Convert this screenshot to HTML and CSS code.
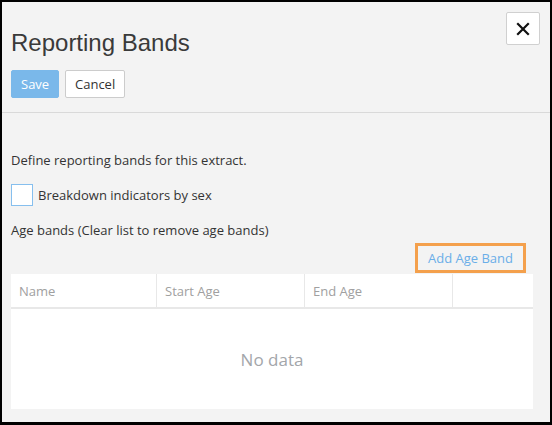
FILE: index.html
```html
<!DOCTYPE html>
<html>
<head>
<meta charset="utf-8">
<link rel="stylesheet" href="styles.css">
</head>
<body>
<div class="frame">
  <div class="header">
    <div class="head-left">
      <h1 class="title">Reporting Bands</h1>
      <div class="actions">
        <button class="btn btn-primary">Save</button>
        <button class="btn btn-default">Cancel</button>
      </div>
    </div>
    <button class="close" aria-label="Close">
      <svg width="14" height="14" viewBox="0 0 14 14"><path d="M2 2 L12 12 M12 2 L2 12" stroke="#111" stroke-width="2.2" stroke-linecap="square"/></svg>
    </button>
  </div>
  <div class="content">
    <p class="intro">Define reporting bands for this extract.</p>
    <label class="check-row"><span class="checkbox"></span><span>Breakdown indicators by sex</span></label>
    <p class="bands-label">Age bands (Clear list to remove age bands)</p>
    <div class="add-row"><button class="add-btn">Add Age Band</button></div>
    <div class="grid">
      <div class="grid-head">
        <div class="cell">Name</div>
        <div class="cell">Start Age</div>
        <div class="cell">End Age</div>
        <div class="cell"></div>
      </div>
      <div class="grid-body">No data</div>
    </div>
  </div>
</div>
</body>
</html>
```
FILE: styles.css
```css
html, body { margin: 0; padding: 0; }
body { font-family: "Open Sans", "Noto Sans", sans-serif; color: #333; }
.frame {
  width: 552px; height: 425px; box-sizing: border-box;
  border: 2px solid #000; border-bottom-width: 3px;
  background: #f3f3f3; overflow: hidden;
}
.header {
  display: flex; justify-content: space-between; align-items: flex-start;
  padding: 0 10px 14px 9px;
  border-bottom: 1px solid #d9d9d9;
}
.head-left { margin-top: 27px; }
.title {
  margin: 0; font-family: "Liberation Sans", Arial, sans-serif;
  font-weight: normal; font-size: 24px; line-height: 28px; color: #3a3a3a;
}
.actions { display: flex; gap: 6px; margin-top: 13px; }
.btn {
  font-family: "Open Sans", sans-serif; font-size: 13px;
  height: 28px; box-sizing: border-box; border-radius: 2px; padding: 0 9px; cursor: pointer;
}
.btn-primary { background: #7ab8ea; border: 1px solid #7ab8ea; color: #fff; width: 48px; }
.btn-default { background: #fff; border: 1px solid #cccccc; color: #333; width: 60px; }
.close {
  margin-top: 10px; width: 34px; height: 33px; box-sizing: border-box;
  background: #fff; border: 1px solid #d0d0d0; border-radius: 2px;
  display: flex; align-items: center; justify-content: center; padding: 0;
}
.content { padding: 0 17px 0 9px; font-size: 13px; }
.intro { margin: 38px 0 0; line-height: 18px; }
.check-row { display: flex; align-items: center; gap: 5px; margin-top: 15px; }
.checkbox {
  width: 22px; height: 22px; box-sizing: border-box;
  border: 1px solid #86bfee; background: #fff;
}
.bands-label { margin: 15px 0 0; line-height: 18px; }
.add-row { display: flex; justify-content: flex-end; margin-top: 4px; padding-right: 7px; }
.add-btn {
  font-family: "Open Sans", sans-serif; font-size: 13px; color: #6aaee8;
  background: transparent; border: 3px solid #f4a04c; height: 30px; width: 111px;
  box-sizing: border-box; padding: 0;
}
.grid { margin-top: 1px; background: #fff; }
.grid-head {
  display: grid; grid-template-columns: 146px 148px 148px 1fr;
  height: 33px; border-bottom: 2px solid #e8e8e8;
}
.cell {
  color: #a0a0a0; padding: 2px 0 0 8px; line-height: 31px;
  border-right: 1px solid #e8e8e8;
}
.cell:last-child { border-right: none; }
.grid-body {
  height: 100px; display: flex; align-items: center; justify-content: center;
  font-size: 17px; color: #a3a6aa;
}
```
